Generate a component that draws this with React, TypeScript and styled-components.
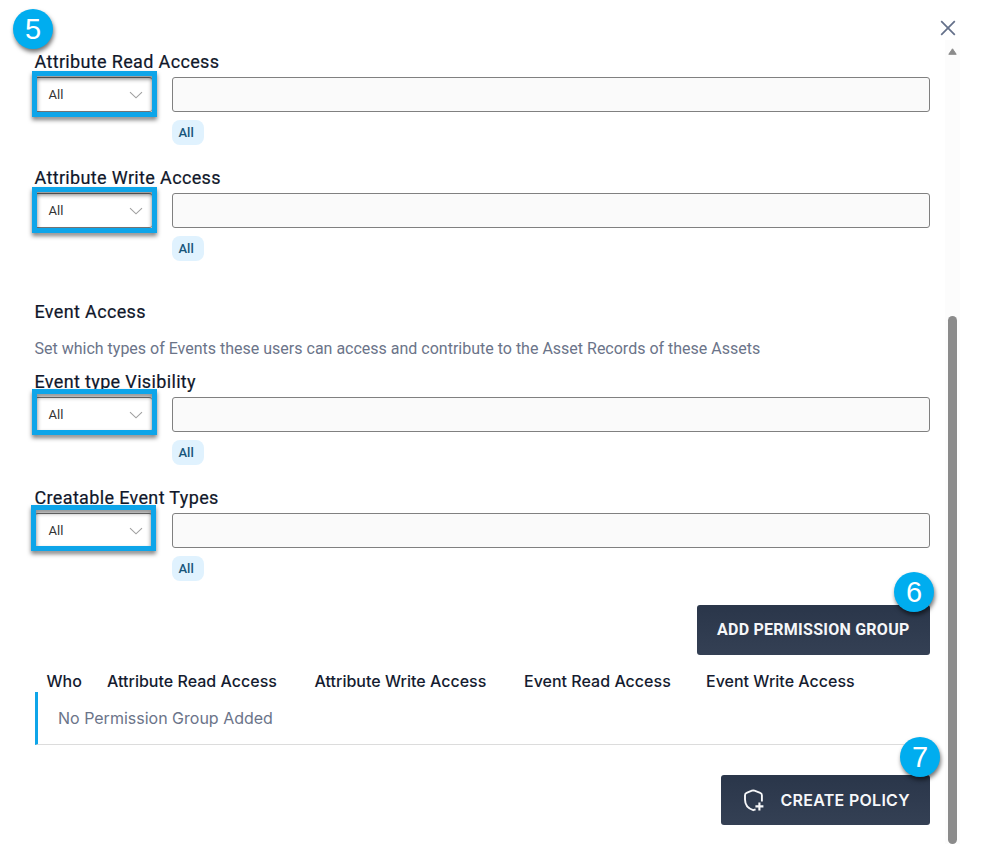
import React from "react";
import styled, { createGlobalStyle } from "styled-components";

const GlobalStyle = createGlobalStyle`
  *, *::before, *::after { box-sizing: border-box; }
  html, body { margin: 0; background: #fff; }
  body { overflow: hidden; font-family: Roboto, sans-serif; color: #1a2236; }
  button { font: inherit; border: 0; padding: 0; background: none; cursor: pointer; }
  h2, p { margin: 0; font-weight: 400; }
`;

const Dialog = styled.div`
  position: relative;
  width: 981px;
  height: 844px;
  display: grid;
  grid-template-columns: 945px 15px;
  grid-template-rows: 40px 1fr;
  overflow: hidden;
  background: #fff;
`;

const Header = styled.header`
  grid-column: 1 / 3;
  display: flex;
  justify-content: flex-end;
  align-items: flex-end;
  padding-bottom: 3px;
`;

const CloseButton = styled.button`
  width: 24px;
  height: 18px;
  display: flex;
  align-items: center;
  justify-content: center;
`;

const Content = styled.main`
  display: flex;
  flex-direction: column;
  padding: 10px 15px 0 35px;
`;

const ScrollTrack = styled.div`
  display: flex;
  flex-direction: column;
  align-items: center;
  background: #fcfcfc;
  padding-top: 8px;
`;

const ScrollArrow = styled.svg`
  display: block;
  width: 9px;
  height: 7px;
`;

const ScrollThumb = styled.div`
  width: 9px;
  height: 528px;
  margin-top: 261px;
  border-radius: 4.5px;
  background: #8b8b8b;
`;

const Field = styled.section`
  height: 116px;
`;

const Title = styled.h2`
  height: 24px;
  margin-left: -0.5px;
  font-size: 18px;
  font-weight: 400;
  line-height: 24px;
  letter-spacing: 0.35px;
  white-space: nowrap;
  color: #10172a;
  -webkit-text-stroke: 0.2px #10172a;
`;

const Controls = styled.div`
  display: grid;
  grid-template-columns: 117px 758px;
  column-gap: 20px;
  row-gap: 8px;
  margin-top: 3px;
`;

const Select = styled.div`
  position: relative;
  height: 35px;
  display: flex;
  align-items: center;
  justify-content: space-between;
  padding: 0 9px 0 13.5px;
  border: 1px solid #777;
  border-width: 1px 0;
  border-radius: 3px;
  font-size: 13px;
  color: #333;
`;

const Highlight = styled.span<{ $x: number; $y: number }>`
  position: absolute;
  left: ${(p) => p.$x}px;
  top: ${(p) => p.$y}px;
  width: 125px;
  height: 46px;
  border: 5px solid #0ea5e9;
  filter: drop-shadow(0 3px 2px rgba(0, 0, 0, 0.5));
  pointer-events: none;
`;

const TextInput = styled.input`
  width: 758px;
  height: 35px;
  border: 1px solid #808080;
  border-radius: 3px;
  background: #fafafa;
  outline: none;
`;

const Chip = styled.span`
  grid-column: 2;
  justify-self: start;
  width: 32px;
  height: 25px;
  padding-left: 6.5px;
  border-radius: 8px;
  background: #e0f2fe;
  color: #17557a;
  font-size: 13px;
  font-weight: 500;
  line-height: 25px;
`;

const EventIntro = styled.section`
  padding-top: 18px;
  height: 88px;
`;

const Description = styled.p`
  margin: 13px 0 0 -0.5px;
  font-size: 16px;
  line-height: 24px;
  white-space: nowrap;
  color: #6b7489;
`;

const PrimaryButton = styled.button<{ $width: number }>`
  position: relative;
  flex: none;
  align-self: flex-end;
  width: ${(p) => p.$width}px;
  height: 50px;
  border-radius: 3px;
  background: linear-gradient(#2a364a, #344054);
  color: #f6f7f9;
  display: flex;
  align-items: center;
  white-space: nowrap;
`;

const AddButton = styled(PrimaryButton)`
  margin-top: 3px;
  padding: 0 0 2px 20px;
  font-size: 16px;
  font-weight: 700;
  letter-spacing: 0.25px;
`;

const CreateButton = styled(PrimaryButton)`
  margin-top: 30px;
  padding-left: 20px;
  gap: 14.5px;
  font-family: Inter, sans-serif;
  font-size: 16px;
  font-weight: 600;
  letter-spacing: 0.28px;
`;

const TableHead = styled.div`
  display: grid;
  grid-template-columns: 60.5px 207.5px 209.5px 182px 1fr;
  height: 37px;
  padding: 14px 0 0 11.5px;
  font: 500 16px/24px Inter, sans-serif;
  letter-spacing: 0.015px;
  white-space: nowrap;
  color: #151c30;
`;

const EmptyRow = styled.div`
  height: 53px;
  padding-left: 20px;
  border-left: 3px solid #0ea5e9;
  border-bottom: 1px solid #dcdcdc;
  font: 400 16px/53px Inter, sans-serif;
  color: #6b7489;
`;

const StepBadge = styled.span<{ $x: number; $y: number }>`
  position: absolute;
  left: ${(p) => p.$x}px;
  top: ${(p) => p.$y}px;
  width: 40px;
  height: 40px;
  border-radius: 50%;
  background: #00adef;
  box-shadow: 1px 3px 4px rgba(0, 0, 0, 0.55);
  color: #fff;
  font: 400 29px/41px "Liberation Sans", Arial, sans-serif;
  letter-spacing: 0;
  text-align: center;
`;

const Chevron = () => (
  <svg width="14" height="8" viewBox="0 0 14 8" fill="none" stroke="#a0a0a0" strokeWidth="1.1">
    <path d="M1 1.2 7 6.8 13 1.2" />
  </svg>
);

const ShieldPlus = () => (
  <svg width="25" height="24" viewBox="0 0 25 24" fill="none" stroke="#f6f7f9" strokeWidth="1.9" strokeLinejoin="round">
    <path d="M20.9 13.6V7.2Q20.9 5.4 19.2 4.8L13.5 2.7Q12.2 2.2 10.9 2.7L5.6 4.8Q4 5.4 4 7.2V11.6C4 16.6 7.2 20.6 12.2 22.2L14.6 21.4" />
    <path d="M18.4 14.4V22.4M14.4 18.4H22.4" strokeWidth="2.1" />
  </svg>
);

interface AccessFieldProps {
  label: string;
  markX?: number;
  markY?: number;
}

const AccessField = ({ label, markX = -3, markY = -7 }: AccessFieldProps) => (
  <Field>
    <Title>{label}</Title>
    <Controls>
      <Select>
        All
        <Chevron />
        <Highlight $x={markX} $y={markY} />
      </Select>
      <TextInput aria-label={label} />
      <Chip>All</Chip>
    </Controls>
  </Field>
);

const columns = [
  "Who",
  "Attribute Read Access",
  "Attribute Write Access",
  "Event Read Access",
  "Event Write Access",
];

export default function App() {
  return (
    <>
      <GlobalStyle />
      <Dialog>
        <Header>
          <CloseButton aria-label="Close">
            <svg width="16" height="16" viewBox="0 0 16 16" stroke="#64708a" strokeWidth="1.7">
              <path d="M1.2 1.2 14.8 14.8M14.8 1.2 1.2 14.8" />
            </svg>
          </CloseButton>
        </Header>
        <Content>
          <AccessField label="Attribute Read Access" />
          <AccessField label="Attribute Write Access" />
          <EventIntro>
            <Title>Event Access</Title>
            <Description>
              Set which types of Events these users can access and contribute to the Asset Records of these Assets
            </Description>
          </EventIntro>
          <AccessField label="Event type Visibility" markY={-9} />
          <AccessField label="Creatable Event Types" markX={-4} markY={-9} />
          <AddButton $width={233}>
            ADD PERMISSION GROUP
            <StepBadge $x={197} $y={-33}>6</StepBadge>
          </AddButton>
          <TableHead>
            {columns.map((name) => (
              <span key={name}>{name}</span>
            ))}
          </TableHead>
          <EmptyRow>No Permission Group Added</EmptyRow>
          <CreateButton $width={209}>
            <ShieldPlus />
            CREATE POLICY
            <StepBadge $x={179} $y={-38}>7</StepBadge>
          </CreateButton>
        </Content>
        <ScrollTrack>
          <ScrollArrow viewBox="0 0 9 7">
            <path d="M4.5 0.8 8.2 6.3H0.8Z" fill="#8b8b8b" stroke="#8b8b8b" strokeLinejoin="round" />
          </ScrollArrow>
          <ScrollThumb />
        </ScrollTrack>
        <StepBadge $x={13} $y={9}>5</StepBadge>
      </Dialog>
    </>
  );
}
